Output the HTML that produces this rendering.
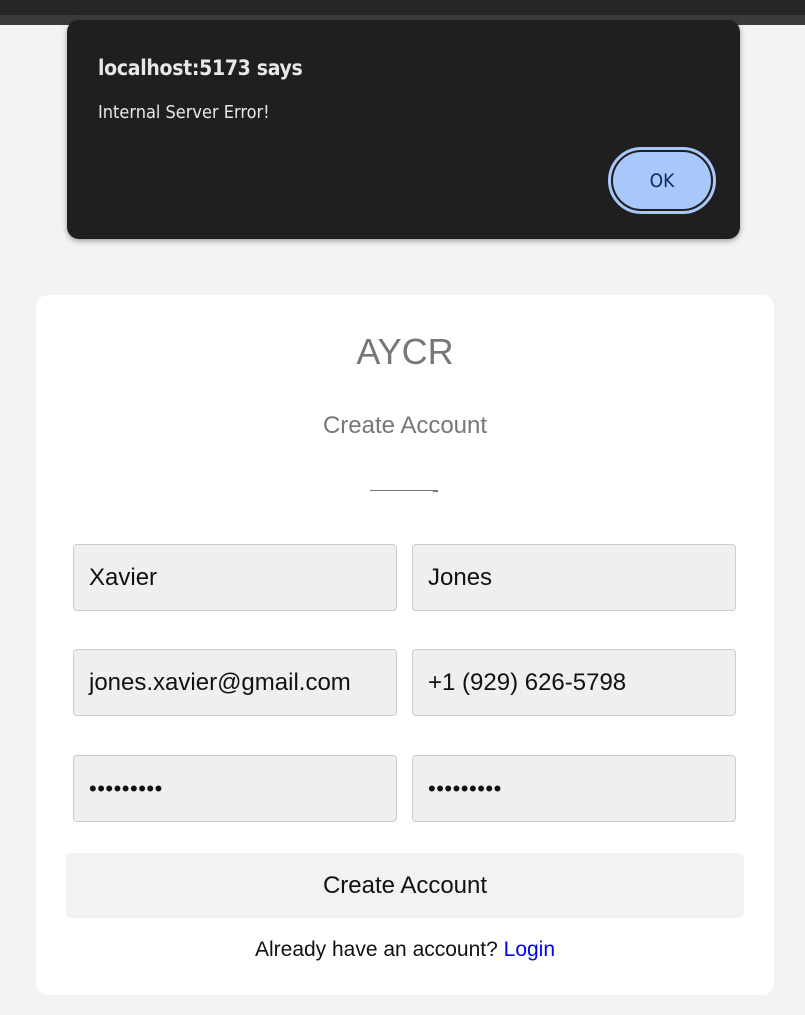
<!DOCTYPE html>
<html><head><style>
*{box-sizing:border-box;margin:0;padding:0}
body{width:805px;height:1015px;background:#f3f3f3;font-family:"Liberation Sans",sans-serif;position:relative;overflow:hidden}
.top1{position:absolute;left:0;top:0;width:805px;height:15px;background:#262626}
.top2{position:absolute;left:0;top:15px;width:805px;height:10px;background:#3b3b3b}
.dlg{position:absolute;left:67px;top:20px;width:673px;height:219px;background:#1f1f1f;border-radius:12px;box-shadow:0 2px 6px rgba(0,0,0,.35);color:#e8e8e8;font-family:"DejaVu Sans Condensed","Liberation Sans",sans-serif}
.dlg h1{position:absolute;left:31px;top:36px;font-size:21px;font-weight:bold;letter-spacing:-.3px}
.dlg p{position:absolute;left:31px;top:82px;font-size:18px}
.ok{position:absolute;left:541px;top:127px;width:108px;height:67px;border-radius:34px;border:3px solid #a8c7fa;background:#1f1f1f;padding:2px}
.ok div{width:100%;height:100%;border-radius:30px;background:#a8c7fa;color:#0b2a5a;font-size:19px;display:flex;align-items:center;justify-content:center}
.card{position:absolute;left:36px;top:295px;width:738px;height:700px;background:#fff;border-radius:12px}
.t{position:absolute;width:100%;text-align:center;color:#777}
.in{position:absolute;width:324px;height:67px;background:#efefef;border:1px solid #ccc;border-radius:4px;font-size:24px;color:#111;padding-left:15px;line-height:65px}
.pw{font-size:22px;letter-spacing:0.5px}
.btn{position:absolute;left:30px;top:558px;width:678px;height:65px;background:#f2f2f2;border-radius:5px;text-align:center;line-height:65px;font-size:24px;color:#111}
</style></head><body>
<div class="top1"></div><div class="top2"></div>
<div class="card">
<div class="t" style="top:36px;font-size:36px">AYCR</div>
<div class="t" style="top:117px;font-size:24px">Create Account</div>
<div style="position:absolute;left:334px;top:195px;width:63px;height:1px;background:#777"></div>
<div style="position:absolute;left:397px;top:195px;width:5px;height:2px;background:#777"></div>
<div class="in" style="left:37px;top:249px">Xavier</div>
<div class="in" style="left:376px;top:249px">Jones</div>
<div class="in" style="left:37px;top:354px">jones.xavier@gmail.com</div>
<div class="in" style="left:376px;top:354px">+1 (929) 626-5798</div>
<div class="in pw" style="left:37px;top:460px">•••••••••</div>
<div class="in pw" style="left:376px;top:460px">•••••••••</div>
<div class="btn">Create Account</div>
<div class="t" style="top:643px;font-size:21px;color:#111">Already have an account? <span style="color:#0000ee">Login</span></div>
</div>
<div class="dlg"><h1>localhost:5173 says</h1><p>Internal Server Error!</p><div class="ok"><div>OK</div></div></div>
</body></html>
